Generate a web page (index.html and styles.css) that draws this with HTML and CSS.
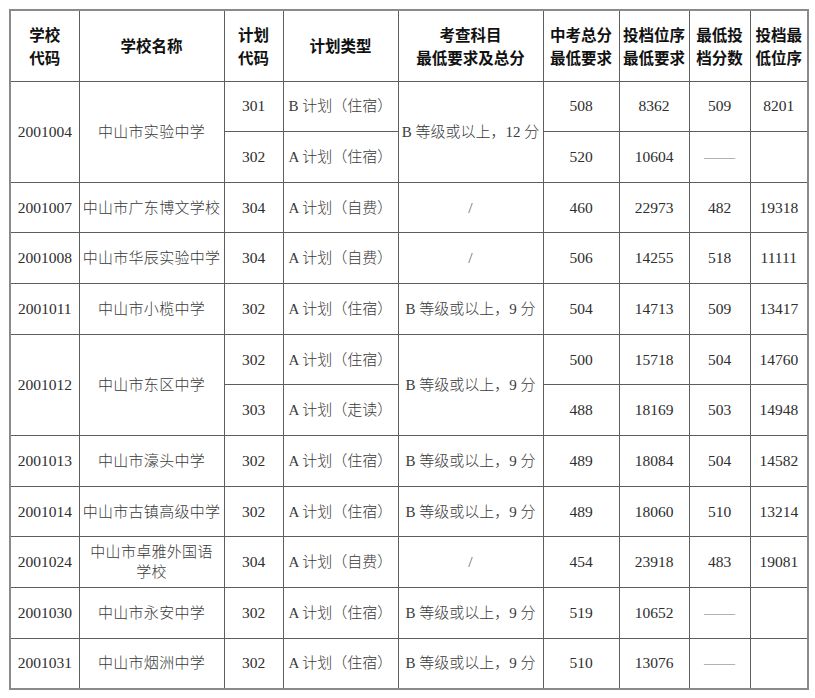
FILE: index.html
```html
<!DOCTYPE html>
<html lang="zh-CN">
<head>
<meta charset="utf-8">
<title>投档情况</title>
<link rel="stylesheet" href="styles.css">
</head>
<body>
<div class="page">
<table class="grid">
<colgroup>
<col class="c1"><col class="c2"><col class="c3"><col class="c4"><col class="c5"><col class="c6"><col class="c7"><col class="c8"><col class="c9">
</colgroup>
<thead>
<tr class="head">
<th>学校<br>代码</th>
<th>学校名称</th>
<th>计划<br>代码</th>
<th>计划类型</th>
<th>考查科目<br>最低要求及总分</th>
<th>中考总分<br>最低要求</th>
<th>投档位序<br>最低要求</th>
<th>最低投<br>档分数</th>
<th>投档最<br>低位序</th>
</tr>
</thead>
<tbody>
<tr>
<td rowspan="2">2001004</td>
<td rowspan="2" class="name">中山市实验中学</td>
<td>301</td>
<td class="plan">B 计划（住宿）</td>
<td rowspan="2" class="req">B 等级或以上，12 分</td>
<td>508</td><td>8362</td><td>509</td><td>8201</td>
</tr>
<tr>
<td>302</td>
<td class="plan">A 计划（住宿）</td>
<td>520</td><td>10604</td><td class="dash">——</td><td></td>
</tr>
<tr>
<td>2001007</td>
<td class="name">中山市广东博文学校</td>
<td>304</td>
<td class="plan">A 计划（自费）</td>
<td class="slash">/</td>
<td>460</td><td>22973</td><td>482</td><td>19318</td>
</tr>
<tr>
<td>2001008</td>
<td class="name">中山市华辰实验中学</td>
<td>304</td>
<td class="plan">A 计划（自费）</td>
<td class="slash">/</td>
<td>506</td><td>14255</td><td>518</td><td>11111</td>
</tr>
<tr>
<td>2001011</td>
<td class="name">中山市小榄中学</td>
<td>302</td>
<td class="plan">A 计划（住宿）</td>
<td class="req">B 等级或以上，9 分</td>
<td>504</td><td>14713</td><td>509</td><td>13417</td>
</tr>
<tr>
<td rowspan="2">2001012</td>
<td rowspan="2" class="name">中山市东区中学</td>
<td>302</td>
<td class="plan">A 计划（住宿）</td>
<td rowspan="2" class="req">B 等级或以上，9 分</td>
<td>500</td><td>15718</td><td>504</td><td>14760</td>
</tr>
<tr>
<td>303</td>
<td class="plan">A 计划（走读）</td>
<td>488</td><td>18169</td><td>503</td><td>14948</td>
</tr>
<tr>
<td>2001013</td>
<td class="name">中山市濠头中学</td>
<td>302</td>
<td class="plan">A 计划（住宿）</td>
<td class="req">B 等级或以上，9 分</td>
<td>489</td><td>18084</td><td>504</td><td>14582</td>
</tr>
<tr>
<td>2001014</td>
<td class="name">中山市古镇高级中学</td>
<td>302</td>
<td class="plan">A 计划（住宿）</td>
<td class="req">B 等级或以上，9 分</td>
<td>489</td><td>18060</td><td>510</td><td>13214</td>
</tr>
<tr>
<td>2001024</td>
<td class="name two">中山市卓雅外国语<br>学校</td>
<td>304</td>
<td class="plan">A 计划（自费）</td>
<td class="slash">/</td>
<td>454</td><td>23918</td><td>483</td><td>19081</td>
</tr>
<tr>
<td>2001030</td>
<td class="name">中山市永安中学</td>
<td>302</td>
<td class="plan">A 计划（住宿）</td>
<td class="req">B 等级或以上，9 分</td>
<td>519</td><td>10652</td><td class="dash">——</td><td></td>
</tr>
<tr>
<td>2001031</td>
<td class="name">中山市烟洲中学</td>
<td>302</td>
<td class="plan">A 计划（住宿）</td>
<td class="req">B 等级或以上，9 分</td>
<td>510</td><td>13076</td><td class="dash">——</td><td></td>
</tr>
</tbody>
</table>
</div>
</body>
</html>
```
FILE: styles.css
```css
html, body {
  margin: 0;
  padding: 0;
  background: #ffffff;
}

.page {
  padding: 9px 0 0 9px;
}

.grid {
  border-collapse: collapse;
  table-layout: fixed;
  width: 799px;
  border: 2px solid #8a8a8a;
  font-family: "Liberation Serif", "Noto Sans CJK SC", serif;
  font-size: 15.5px;
  color: #2e2e2e;
}

.c1 { width: 69px; }
.c2 { width: 145px; }
.c3 { width: 59px; }
.c4 { width: 115px; }
.c5 { width: 145px; }
.c6 { width: 76px; }
.c7 { width: 70px; }
.c8 { width: 61px; }
.c9 { width: 58px; }

.grid th,
.grid td {
  border: 1px solid #5e5e5e;
  padding: 0;
  text-align: center;
  vertical-align: middle;
  white-space: nowrap;
  overflow: visible;
}

.head {
  height: 71px;
}

.grid th {
  font-family: "Noto Sans CJK SC", sans-serif;
  font-weight: 700;
  font-size: 15.5px;
  line-height: 23px;
  color: #111111;
}

.grid tbody tr {
  height: 50.67px;
}

.grid td {
  line-height: 20px;
}

.name,
.plan,
.req {
  font-family: "Liberation Serif", "Noto Sans CJK SC", serif;
  font-size: 15px;
  font-weight: 300;
  color: #3a3a3a;
}

.name {
  letter-spacing: 0.3px;
}

.two {
  line-height: 24px;
}

.plan {
  text-align: left;
  padding-left: 3px;
}

.slash {
  color: #666666;
}

.dash {
  color: #777777;
}
```
